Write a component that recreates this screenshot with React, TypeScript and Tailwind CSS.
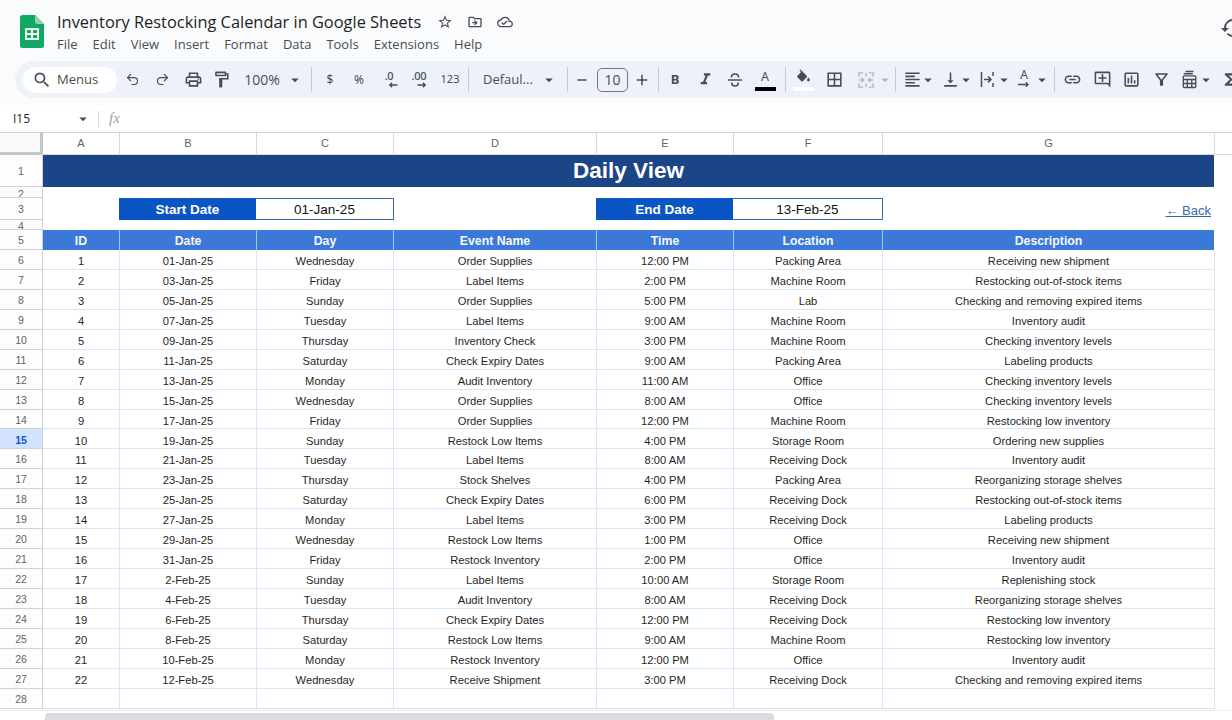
import type { ReactNode } from "react";
import { Redo2, Undo2 } from "lucide-react";
import {
  MdAdd,
  MdArrowDropDown,
  MdBorderAll,
  MdFormatAlignLeft,
  MdFormatItalic,
  MdFunctions,
  MdHistory,
  MdLink,
  MdOutlineAddComment,
  MdOutlineAssessment,
  MdOutlineCloudDone,
  MdOutlineDriveFileMove,
  MdOutlineFilterAlt,
  MdOutlineFormatPaint,
  MdOutlinePrint,
  MdRemove,
  MdSearch,
  MdStarBorder,
  MdVerticalAlignBottom,
} from "react-icons/md";

const MENUS = ["File", "Edit", "View", "Insert", "Format", "Data", "Tools", "Extensions", "Help"];
const COLUMNS = ["A", "B", "C", "D", "E", "F", "G"];
const HEADERS = ["ID", "Date", "Day", "Event Name", "Time", "Location", "Description"];

const ROWS = [
  ["1", "01-Jan-25", "Wednesday", "Order Supplies", "12:00 PM", "Packing Area", "Receiving new shipment"],
  ["2", "03-Jan-25", "Friday", "Label Items", "2:00 PM", "Machine Room", "Restocking out-of-stock items"],
  ["3", "05-Jan-25", "Sunday", "Order Supplies", "5:00 PM", "Lab", "Checking and removing expired items"],
  ["4", "07-Jan-25", "Tuesday", "Label Items", "9:00 AM", "Machine Room", "Inventory audit"],
  ["5", "09-Jan-25", "Thursday", "Inventory Check", "3:00 PM", "Machine Room", "Checking inventory levels"],
  ["6", "11-Jan-25", "Saturday", "Check Expiry Dates", "9:00 AM", "Packing Area", "Labeling products"],
  ["7", "13-Jan-25", "Monday", "Audit Inventory", "11:00 AM", "Office", "Checking inventory levels"],
  ["8", "15-Jan-25", "Wednesday", "Order Supplies", "8:00 AM", "Office", "Checking inventory levels"],
  ["9", "17-Jan-25", "Friday", "Order Supplies", "12:00 PM", "Machine Room", "Restocking low inventory"],
  ["10", "19-Jan-25", "Sunday", "Restock Low Items", "4:00 PM", "Storage Room", "Ordering new supplies"],
  ["11", "21-Jan-25", "Tuesday", "Label Items", "8:00 AM", "Receiving Dock", "Inventory audit"],
  ["12", "23-Jan-25", "Thursday", "Stock Shelves", "4:00 PM", "Packing Area", "Reorganizing storage shelves"],
  ["13", "25-Jan-25", "Saturday", "Check Expiry Dates", "6:00 PM", "Receiving Dock", "Restocking out-of-stock items"],
  ["14", "27-Jan-25", "Monday", "Label Items", "3:00 PM", "Receiving Dock", "Labeling products"],
  ["15", "29-Jan-25", "Wednesday", "Restock Low Items", "1:00 PM", "Office", "Receiving new shipment"],
  ["16", "31-Jan-25", "Friday", "Restock Inventory", "2:00 PM", "Office", "Inventory audit"],
  ["17", "2-Feb-25", "Sunday", "Label Items", "10:00 AM", "Storage Room", "Replenishing stock"],
  ["18", "4-Feb-25", "Tuesday", "Audit Inventory", "8:00 AM", "Receiving Dock", "Reorganizing storage shelves"],
  ["19", "6-Feb-25", "Thursday", "Check Expiry Dates", "12:00 PM", "Receiving Dock", "Restocking low inventory"],
  ["20", "8-Feb-25", "Saturday", "Restock Low Items", "9:00 AM", "Machine Room", "Restocking low inventory"],
  ["21", "10-Feb-25", "Monday", "Restock Inventory", "12:00 PM", "Office", "Inventory audit"],
  ["22", "12-Feb-25", "Wednesday", "Receive Shipment", "3:00 PM", "Receiving Dock", "Checking and removing expired items"],
];

const GRID_COLS = "grid-cols-[43px_76px_137px_137px_203px_137px_149px_333px]";

function Btn({ className, children }: { className: string; children: ReactNode }) {
  return <div className={`flex h-6 shrink-0 items-center justify-center text-[#4a4d50] ${className}`}>{children}</div>;
}

function Caret({ className, muted }: { className?: string; muted?: boolean }) {
  return (
    <div className={`flex h-6 w-2.5 shrink-0 items-center justify-center ${muted ? "text-[#b4b8bc]" : "text-[#4a4d50]"} ${className ?? ""}`}>
      <MdArrowDropDown className="size-[18px] shrink-0" />
    </div>
  );
}

function Divider({ className }: { className: string }) {
  return <div className={`h-[25px] w-px shrink-0 bg-[#c7c9cc] ${className}`} />;
}

function SheetsLogo() {
  return (
    <svg width="24" height="33" viewBox="0 0 24 33" className="shrink-0">
      <path d="M2.5 0H15l9 9v21.500a2.500 2.500 0 0 1-2.500 2.500h-19A2.500 2.500 0 0 1 0 30.500V2.500A2.500 2.500 0 0 1 2.500 0z" fill="#11a861" />
      <path d="M15 0l9 9h-6.500A2.500 2.500 0 0 1 15 6.500z" fill="#8ed1b1" />
      <path d="M6 14h12v10H6z" fill="none" stroke="#fff" strokeWidth="1.800" />
      <path d="M12 14v10M6 19h12" stroke="#fff" strokeWidth="1.800" />
    </svg>
  );
}

function DecimalIcon({ label, dir }: { label: string; dir: "left" | "right" }) {
  return (
    <div className="flex h-6 w-7 flex-col items-center text-[#4a4d50]">
      <span className="mt-[1px] text-[11px] leading-[13px] font-medium tracking-tight [font-family:'Noto_Sans',sans-serif]">{label}</span>
      <svg width="10" height="6" viewBox="0 0 10 6" className={dir === "left" ? "ml-[8px]" : "ml-[6px]"}>
        {dir === "left" ? (
          <path d="M9.500 3H2M4 .8 1.800 3 4 5.200" fill="none" stroke="currentColor" strokeWidth="1.400" />
        ) : (
          <path d="M.5 3H8M6 .8 8.200 3 6 5.200" fill="none" stroke="currentColor" strokeWidth="1.400" />
        )}
      </svg>
    </div>
  );
}

function StrikeIcon() {
  return (
    <svg width="16" height="16" viewBox="0 0 16 16" fill="none" stroke="#4a4d50" strokeWidth="1.500">
      <path d="M1 8h14M4.500 5.500V4.800C4.500 3 6 2 8 2s3.500 1 3.500 2.800v.7M4.800 10.500v.7C4.800 13 6.200 14 8 14s3.200-1 3.200-2.800v-.7" />
    </svg>
  );
}

function FillIcon() {
  return (
    <svg width="17" height="17" viewBox="0 0 24 20" fill="currentColor">
      <path d="M16.560 8.940L7.620 0 6.210 1.410l2.380 2.380-5.150 5.150c-.59.59-.59 1.540 0 2.120l5.500 5.500c.29.29.68.44 1.060.44s.77-.15 1.060-.44l5.500-5.500c.59-.58.59-1.530 0-2.120zM19 11.500s-2 2.170-2 3.500c0 1.100.9 2 2 2s2-.9 2-2c0-1.330-2-3.500-2-3.500z" />
    </svg>
  );
}

function MergeIcon() {
  return (
    <svg width="16" height="16" viewBox="0 0 18 18" fill="none" stroke="#b4b8bc" strokeWidth="1.600">
      <path d="M1 5V1h5M12 1h5v4M1 13v4h5M12 17h5v-4M1 9h5M17 9h-5M4 6.500 6.500 9 4 11.500M14 6.500 11.500 9 14 11.500M9 1v4M9 13v4" />
    </svg>
  );
}

function WrapIcon() {
  return (
    <svg width="14" height="17" viewBox="0 0 14 17" fill="none" stroke="#4a4d50" strokeWidth="1.500">
      <path d="M1.500 1v15M13 1v4M13 12v4M4 8.500h7M8 5.500l3 3-3 3" />
    </svg>
  );
}

function TextRotateIcon() {
  return (
    <div className="flex h-6 w-[22px] flex-col items-center text-[#4a4d50]">
      <span className="text-[12px] leading-[14px] [font-family:'Noto_Sans',sans-serif]">A</span>
      <svg width="14" height="6" viewBox="0 0 14 6" fill="none" stroke="currentColor" strokeWidth="1.300">
        <path d="M1 2.500h10M8.800.3 11 2.500 8.800 4.700" />
      </svg>
    </div>
  );
}

function TableIcon() {
  return (
    <svg width="16" height="19" viewBox="0 0 18 20" fill="none" stroke="#4a4d50" strokeWidth="1.500">
      <path d="M4 1h9M2 3.500h10" />
      <rect x="1.500" y="6" width="14" height="13" rx="1" />
      <path d="M1.500 10h14M1.500 14.500h14M6 10v9M11 10v9" />
    </svg>
  );
}

function Toolbar() {
  return (
    <div className="ml-[15px] flex h-[37px] items-center overflow-hidden rounded-l-[19px] bg-[#edf2fa] pl-2">
      <div className="flex h-[26px] w-[94px] shrink-0 items-center rounded-full bg-white pl-[9px] text-[#4a4d50]">
        <MdSearch className="size-[20px]" />
        <span className="ml-[5px] text-[13px] [font-family:'Open_Sans',sans-serif]">Menus</span>
      </div>
      <Btn className="ml-[1px] w-7"><Undo2 className="size-[15px]" strokeWidth={1.800} /></Btn>
      <Btn className="ml-[2px] w-7"><Redo2 className="size-[15px]" strokeWidth={1.800} /></Btn>
      <Btn className="ml-[3px] w-7"><MdOutlinePrint className="size-[19px]" /></Btn>
      <Btn className="w-7"><MdOutlineFormatPaint className="size-[19px]" /></Btn>
      <Btn className="ml-[2px] w-[50px] text-[14px] [font-family:'Open_Sans',sans-serif]">100%</Btn>
      <Caret className="ml-[3px]" />
      <Divider className="ml-[11px]" />
      <Btn className="ml-[4px] w-7 text-[12px] [font-family:'Noto_Sans',sans-serif]">$</Btn>
      <Btn className="ml-[1px] w-7 text-[12px] [font-family:'Noto_Sans',sans-serif]">%</Btn>
      <div className="ml-[2px] shrink-0"><DecimalIcon label=".0" dir="left" /></div>
      <div className="ml-[2px] shrink-0"><DecimalIcon label=".00" dir="right" /></div>
      <Btn className="ml-[3px] w-7 text-[11px] [font-family:'Noto_Sans',sans-serif]">123</Btn>
      <Divider className="ml-[4px]" />
      <div className="ml-[14px] w-[51px] shrink-0 text-[13px] whitespace-nowrap text-[#4a4d50] [font-family:'Open_Sans',sans-serif]">Defaul...</div>
      <Caret className="ml-[10px]" />
      <Divider className="ml-[13px]" />
      <Btn className="ml-[4px] w-5"><MdRemove className="size-[16px]" /></Btn>
      <div className="ml-[5px] flex h-[24px] w-[31px] shrink-0 items-center justify-center rounded-[5px] border border-[#747775] text-[14px] text-[#4a4d50] [font-family:'Open_Sans',sans-serif]">10</div>
      <Btn className="ml-[4px] w-5"><MdAdd className="size-[18px]" /></Btn>
      <Divider className="ml-[6px]" />
      <Btn className="ml-[2px] w-7 text-[13px] font-bold [font-family:'Noto_Sans',sans-serif]">B</Btn>
      <Btn className="ml-[2px] w-7"><MdFormatItalic className="size-[19px]" /></Btn>
      <Btn className="ml-[2px] w-7"><StrikeIcon /></Btn>
      <div className="ml-[2px] flex h-6 w-7 shrink-0 flex-col items-center text-[#4a4d50]">
        <span className="text-[12.5px] leading-[17px] [font-family:'Noto_Sans',sans-serif]">A</span>
        <div className="mt-[2px] h-[4px] w-[21px] bg-black" />
      </div>
      <Divider className="ml-[6px]" />
      <div className="ml-[3px] flex h-6 w-7 shrink-0 flex-col items-center text-[#4a4d50]">
        <FillIcon />
        <div className="mt-[2px] h-[4px] w-[21px] bg-white" />
      </div>
      <Btn className="ml-[3px] w-7"><MdBorderAll className="size-[19px]" /></Btn>
      <Btn className="ml-[4px] w-7"><MergeIcon /></Btn>
      <Caret muted />
      <Divider className="ml-[5px]" />
      <Btn className="ml-[5px] w-[22px]"><MdFormatAlignLeft className="size-[19px]" /></Btn>
      <Caret />
      <Btn className="ml-[6px] w-[22px]"><MdVerticalAlignBottom className="size-[19px]" /></Btn>
      <Caret />
      <Btn className="ml-[5px] w-[22px]"><WrapIcon /></Btn>
      <Caret className="ml-[1px]" />
      <div className="ml-[4px] shrink-0"><TextRotateIcon /></div>
      <Caret className="ml-[2px]" />
      <Divider className="ml-[7px]" />
      <Btn className="ml-[3px] w-7"><MdLink className="size-[19px]" /></Btn>
      <Btn className="ml-[2px] w-7"><MdOutlineAddComment className="size-[19px]" /></Btn>
      <Btn className="ml-[1px] w-7"><MdOutlineAssessment className="size-[19px]" /></Btn>
      <Btn className="ml-[2px] w-7"><MdOutlineFilterAlt className="size-[19px]" /></Btn>
      <Btn className="ml-[4px] w-[22px]"><TableIcon /></Btn>
      <Caret />
      <Btn className="ml-[4px] w-7"><MdFunctions className="size-[19px]" /></Btn>
    </div>
  );
}

function Header() {
  return (
    <div className="bg-[#f9fbfd]">
      <div className="flex h-[61px] items-start">
        <div className="mt-[15px] ml-[20px]"><SheetsLogo /></div>
        <div className="ml-[13px] min-w-0 flex-1">
          <div className="mt-[10px] flex h-[24px] items-center text-[#4a4d50]">
            <span className="text-[16.4px] whitespace-nowrap text-[#1f1f1f] [font-family:'Open_Sans',sans-serif]">Inventory Restocking Calendar in Google Sheets</span>
            <MdStarBorder className="ml-[16px] size-[16px]" />
            <MdOutlineDriveFileMove className="ml-[14px] size-[16px]" />
            <MdOutlineCloudDone className="ml-[14px] size-[16px]" />
          </div>
          <div className="mt-[1px] flex gap-[15px] text-[13px] text-[#4a4d50] [font-family:'Open_Sans',sans-serif]">
            {MENUS.map((m) => (
              <span key={m}>{m}</span>
            ))}
          </div>
        </div>
        <div className="mt-[16px] w-[12px] shrink-0 overflow-hidden">
          <MdHistory className="size-[24px] max-w-none text-[#4a4d50]" />
        </div>
      </div>
      <Toolbar />
      <div className="h-[7px]" />
    </div>
  );
}

function FormulaBar() {
  return (
    <div className="flex h-[27px] items-center bg-white">
      <span className="ml-[13px] w-[60px] text-[12px] text-[#1f1f1f] [font-family:'Open_Sans',sans-serif]">I15</span>
      <MdArrowDropDown className="ml-[1px] size-[18px] text-[#4a4d50]" />
      <div className="ml-[6px] h-[16px] w-px bg-[#dadce0]" />
      <span className="ml-[10px] text-[15px] text-[#9aa0a6] italic [font-family:'Liberation_Serif',serif]">fx</span>
    </div>
  );
}

function RowNum({ n, active, className }: { n: number; active?: boolean; className?: string }) {
  return (
    <div
      className={`flex justify-center overflow-hidden border-r border-b border-[#d0d2d4] text-[10.5px] ${
        active ? "bg-[#d3e3fd] font-bold text-[#0b57d0]" : "bg-[#fdfdfd] text-[#5f6368]"
      } ${className ?? "items-center pt-[3px]"}`}
    >
      {n}
    </div>
  );
}

function Sheet() {
  return (
    <div className="flex-1 overflow-hidden bg-white [font-family:'Liberation_Sans',Arial,sans-serif]">
      <div className={`grid ${GRID_COLS} h-[23px] border-t border-b border-t-[#d0d2d4] border-b-[#d7d9db]`}>
        <div className="-mb-px border-r-[3px] border-b-[3px] border-[#c4c7c9] bg-[#f8f9fa]" />
        {COLUMNS.map((c, i) => (
          <div key={c} className={`flex items-center justify-center border-[#d7d9db] text-[11px] text-[#5f6368] ${i === 0 ? "" : "border-l"} ${i === 6 ? "border-r" : ""}`}>
            {c}
          </div>
        ))}
      </div>

      <div className={`grid ${GRID_COLS} grid-rows-[32px_11px_22px_10px_20px] auto-rows-[19.95px]`}>
        <RowNum n={1} />
        <div className="col-span-7 mr-px flex items-center justify-center bg-[#1c4587] text-[22.500px] font-bold text-white">Daily View</div>

        <RowNum n={2} className="items-start pt-[1px] leading-[12px]" />
        <div className="col-span-7" />

        <RowNum n={3} />
        <div />
        <div className="flex items-center justify-center bg-[#0b54c4] pt-[2px] text-[13.500px] font-bold text-white">Start Date</div>
        <div className="-mr-px flex items-center justify-center border border-l-0 border-[#3d6aa8] pt-[2px] text-[13.500px] text-[#111]">01-Jan-25</div>
        <div />
        <div className="flex items-center justify-center bg-[#0b54c4] pt-[2px] text-[13.500px] font-bold text-white">End Date</div>
        <div className="-mr-px flex items-center justify-center border border-l-0 border-[#3d6aa8] pt-[2px] text-[13.500px] text-[#111]">13-Feb-25</div>
        <div className="flex items-center justify-end pt-[3px] pr-[4px] text-[13px] text-[#3668a8] underline">← Back</div>

        <RowNum n={4} className="items-start leading-[12px]" />
        <div className="col-span-7" />

        <RowNum n={5} />
        {HEADERS.map((h, i) => (
          <div key={h} className={`flex items-center justify-center border-[#a9c4ee] bg-[#3c78d8] pt-[3px] text-[12.300px] font-bold text-[#f4f8ff] ${i === 0 ? "" : "border-l"} ${i === 6 ? "mr-px" : ""}`}>
            {h}
          </div>
        ))}

        {ROWS.map((row, i) => (
          <DataRow key={row[0]} num={i + 6} cells={row} />
        ))}
        <DataRow num={28} cells={["", "", "", "", "", "", ""]} />
      </div>
    </div>
  );
}

function DataRow({ num, cells }: { num: number; cells: string[] }) {
  return (
    <>
      <RowNum n={num} active={num === 15} />
      {cells.map((c, i) => (
        <div
          key={i}
          className={`flex items-center justify-center border-b border-[#d9e5f5] pt-[4px] text-[11.200px] whitespace-nowrap text-[#1f1f1f] ${i === 0 ? "" : "border-l"} ${i === 6 ? "border-r" : ""}`}
        >
          {c}
        </div>
      ))}
    </>
  );
}

function ScrollBar() {
  return (
    <div className="flex h-[10px] items-end border-t border-[#eceef0] bg-white pl-[45px]">
      <div className="h-[7px] w-[729px] rounded-t-[4px] bg-[#dadce0]" />
    </div>
  );
}

export default function App() {
  return (
    <div className="flex h-[720px] w-[1232px] flex-col overflow-hidden bg-white">
      <Header />
      <FormulaBar />
      <Sheet />
      <ScrollBar />
    </div>
  );
}
